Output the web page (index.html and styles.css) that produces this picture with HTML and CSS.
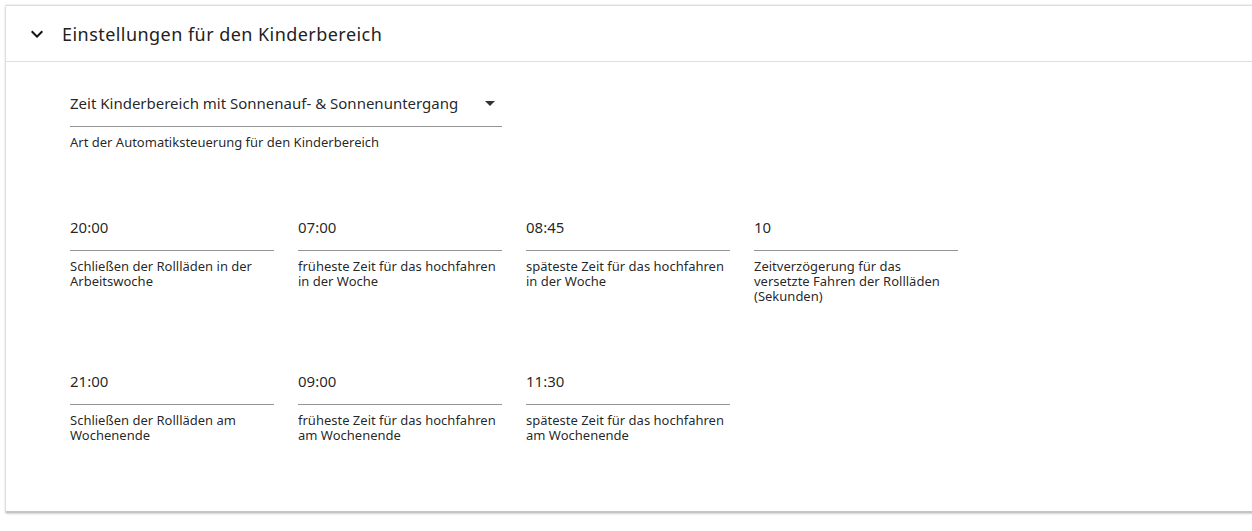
FILE: index.html
```html
<!DOCTYPE html>
<html lang="de">
<head>
    <meta charset="UTF-8">
    <meta name="viewport" content="width=device-width, initial-scale=1.0">
    <title>Kinderbereich</title>
    <link rel="stylesheet" href="styles.css">
</head>
<body>
    <div class="panel">
        <div class="panel-header">
            <svg class="chevron" viewBox="0 0 24 24" width="24" height="24">
                <path d="M16.59 8.59L12 13.17 7.41 8.59 6 10l6 6 6-6z"/>
            </svg>
            <div class="panel-title">Einstellungen für den Kinderbereich</div>
        </div>

        <div class="panel-body">
            <div class="select-field">
                <div class="field-box">
                    <span class="field-value">Zeit Kinderbereich mit Sonnenauf- &amp; Sonnenuntergang</span>
                    <span class="select-arrow"></span>
                </div>
                <div class="field-hint">Art der Automatiksteuerung für den Kinderbereich</div>
            </div>

            <div class="field-grid">
                <div class="field">
                    <div class="field-box"><span class="field-value">20:00</span></div>
                    <div class="field-hint">Schließen der Rollläden in der Arbeitswoche</div>
                </div>
                <div class="field">
                    <div class="field-box"><span class="field-value">07:00</span></div>
                    <div class="field-hint">früheste Zeit für das hochfahren in der Woche</div>
                </div>
                <div class="field">
                    <div class="field-box"><span class="field-value">08:45</span></div>
                    <div class="field-hint">späteste Zeit für das hochfahren in der Woche</div>
                </div>
                <div class="field">
                    <div class="field-box"><span class="field-value">10</span></div>
                    <div class="field-hint">Zeitverzögerung für das versetzte Fahren der Rollläden (Sekunden)</div>
                </div>
                <div class="field">
                    <div class="field-box"><span class="field-value">21:00</span></div>
                    <div class="field-hint">Schließen der Rollläden am Wochenende</div>
                </div>
                <div class="field">
                    <div class="field-box"><span class="field-value">09:00</span></div>
                    <div class="field-hint">früheste Zeit für das hochfahren am Wochenende</div>
                </div>
                <div class="field">
                    <div class="field-box"><span class="field-value">11:30</span></div>
                    <div class="field-hint">späteste Zeit für das hochfahren am Wochenende</div>
                </div>
            </div>
        </div>
    </div>
</body>
</html>
```

FILE: styles.css
```css
html {
    overflow: hidden;
}

body {
    margin: 0;
    padding-bottom: 20px;
    background-color: #fff;
    font-family: "Segoe UI", "Noto Sans", Arial, sans-serif;
    color: rgba(0, 0, 0, 0.87);
}

.panel {
    margin: 5px -20px 0 6px;
    border-top: 1px solid #dcdcdc;
    border-bottom: 2px solid #c4c4c4;
    background-color: #fff;
    box-shadow: -1px 0 2px rgba(0, 0, 0, 0.14), 0 1px 2px rgba(0, 0, 0, 0.12);
}

.panel-header {
    display: flex;
    align-items: center;
    height: 55px;
    padding-left: 19px;
    border-bottom: 1px solid #dedede;
}

.chevron {
    fill: #111;
    flex-shrink: 0;
}

.panel-title {
    margin-left: 13px;
    font-size: 18px;
    letter-spacing: 0.45px;
    color: #222;
}

.panel-body {
    padding: 31px 0 68px 64px;
}

.select-field {
    width: 432px;
}

.field-box {
    display: flex;
    align-items: center;
    justify-content: space-between;
    padding-bottom: 12px;
    border-bottom: 1px solid #949494;
}

.select-field .field-box {
    padding-bottom: 13px;
}

.field-value {
    font-size: 15px;
    line-height: 20px;
}

.field .field-value {
    margin-top: -1px;
    margin-bottom: 1px;
}

.select-arrow {
    width: 0;
    height: 0;
    margin-right: 7px;
    border-left: 5px solid transparent;
    border-right: 5px solid transparent;
    border-top: 5px solid #333;
}

.field-hint {
    margin-top: 8px;
    font-size: 13px;
    line-height: 15px;
}

.field-grid {
    display: grid;
    grid-template-columns: repeat(4, 204px);
    column-gap: 24px;
    row-gap: 68px;
    margin-top: 68px;
}
```
